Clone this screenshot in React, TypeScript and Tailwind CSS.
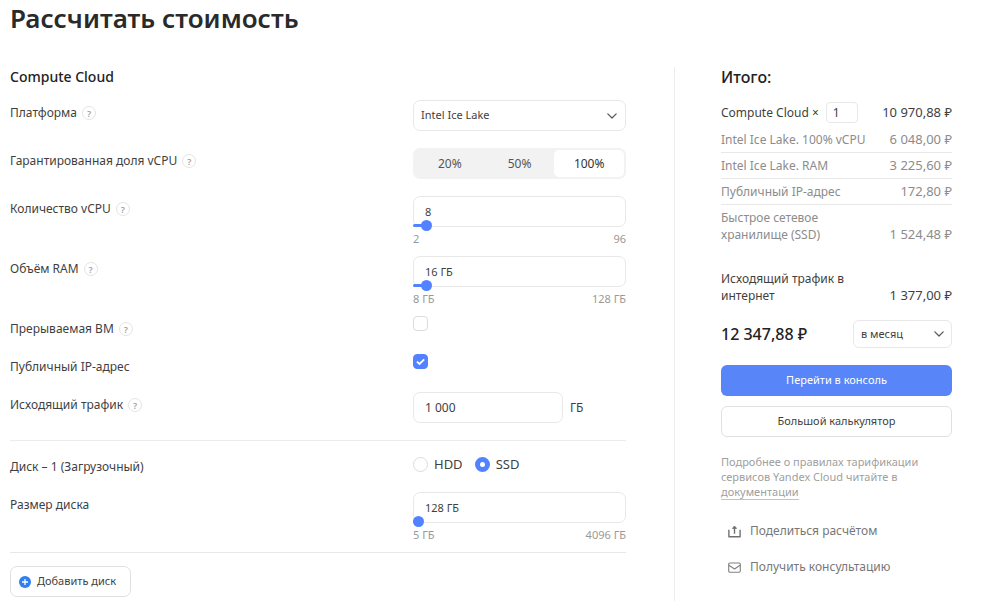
import { useId, useState, type ReactNode } from "react";

function Help({ topic }: { topic: string }) {
  return (
    <button
      type="button"
      aria-label={`Подсказка: ${topic}`}
      className="flex size-[14px] shrink-0 items-center justify-center rounded-full border border-[#e4e4e4] text-[9px] leading-none font-semibold text-[#a0a0a0]"
    >
      ?
    </button>
  );
}

function Chevron({ className }: { className: string }) {
  return (
    <svg
      viewBox="0 0 10 6"
      className={`pointer-events-none absolute top-1/2 h-[6px] w-[10px] -translate-y-1/2 fill-none stroke-[#555] ${className}`}
      strokeWidth="1.2"
      strokeLinecap="round"
      strokeLinejoin="round"
    >
      <path d="M0.8 0.8 5 5 9.2 0.8" />
    </svg>
  );
}

type RowProps = {
  label: string;
  htmlFor?: string;
  help?: boolean;
  className?: string;
  children: ReactNode;
};

function Row({ label, htmlFor, help, className = "mb-[17px]", children }: RowProps) {
  return (
    <div className={`flex items-start justify-between gap-4 ${className}`}>
      <div className="flex items-center gap-[5px] pt-[3px]">
        {htmlFor ? (
          <label htmlFor={htmlFor} className="leading-5">
            {label}
          </label>
        ) : (
          <span className="leading-5">{label}</span>
        )}
        {help && <Help topic={label} />}
      </div>
      <div className="w-[213px] shrink-0">{children}</div>
    </div>
  );
}

type SliderRowProps = {
  label: string;
  help?: boolean;
  min: number;
  max: number;
  initial: number;
  unit?: string;
};

function SliderRow({ label, help, min, max, initial, unit = "" }: SliderRowProps) {
  const id = useId();
  const [value, setValue] = useState(initial);
  const percent = ((value - min) / (max - min)) * 100;
  const parse = (text: string) => {
    const next = parseInt(text, 10);
    if (!Number.isNaN(next)) setValue(Math.min(max, Math.max(min, next)));
  };
  return (
    <Row label={label} htmlFor={id} help={help} className="mb-2">
      <div className="relative">
        <input
          id={id}
          value={`${value}${unit}`}
          onChange={(e) => parse(e.target.value)}
          className="block h-[31px] w-full rounded-[7px] border border-[#e8e8e8] bg-white px-[11px] text-[11px] outline-none"
        />
        <div
          className="absolute bottom-0 left-0 h-[3px] rounded-full bg-[#5282ff]"
          style={{ width: `${percent}%` }}
        />
        <input
          type="range"
          aria-label={label}
          min={min}
          max={max}
          value={value}
          onChange={(e) => setValue(Number(e.target.value))}
          className="absolute -inset-x-[6px] -bottom-1 m-0 h-3 w-auto min-w-[225px] appearance-none bg-transparent [&::-webkit-slider-thumb]:size-[11px] [&::-webkit-slider-thumb]:appearance-none [&::-webkit-slider-thumb]:rounded-full [&::-webkit-slider-thumb]:bg-[#5282ff]"
        />
      </div>
      <div className="flex justify-between pt-[3px] text-[11px] leading-[18px] text-[#999]">
        <span>{`${min}${unit}`}</span>
        <span>{`${max}${unit}`}</span>
      </div>
    </Row>
  );
}

function Check({ id, initial }: { id: string; initial: boolean }) {
  const [on, setOn] = useState(initial);
  return (
    <div className="relative h-[30px]">
      <input
        id={id}
        type="checkbox"
        checked={on}
        onChange={() => setOn(!on)}
        className="block size-[15px] appearance-none rounded-[4px] border border-[#dcdcdc] bg-white checked:border-[#5282ff] checked:bg-[#5282ff]"
      />
      {on && (
        <svg
          viewBox="0 0 15 15"
          className="pointer-events-none absolute top-0 left-0 size-[15px] fill-none stroke-white"
          strokeWidth="1.8"
        >
          <path d="M3.9 7.6 6.5 10 11.2 5.4" />
        </svg>
      )}
    </div>
  );
}

function Radio({ name, checked, onChange }: { name: string; checked: boolean; onChange: () => void }) {
  return (
    <label className="flex items-center gap-[6px] text-[13px] leading-5">
      <input
        type="radio"
        name="disk-type"
        checked={checked}
        onChange={onChange}
        className="size-[15px] appearance-none rounded-full border border-[#dcdcdc] bg-white checked:border-[5px] checked:border-[#5282ff]"
      />
      {name}
    </label>
  );
}

function Configurator() {
  const [share, setShare] = useState("100%");
  const [disk, setDisk] = useState("SSD");
  return (
    <form className="min-w-0 flex-1 border-r border-[#ececec] pr-12 text-xs text-[#3f3f3f]">
      <h2 className="mb-[13px] text-sm leading-5 font-medium text-[#222]">Compute Cloud</h2>

      <Row label="Платформа" htmlFor="platform" help>
        <div className="relative">
          <select
            id="platform"
            className="block h-[31px] w-full appearance-none rounded-[7px] border border-[#e8e8e8] bg-white px-[7px] text-[11px] outline-none"
          >
            <option>Intel Ice Lake</option>
          </select>
          <Chevron className="right-[9px]" />
        </div>
      </Row>

      <Row label="Гарантированная доля vCPU" help>
        <div className="flex h-[31px] rounded-[7px] bg-[#f2f2f2] p-[2px]">
          {["20%", "50%", "100%"].map((item) => (
            <button
              key={item}
              type="button"
              aria-pressed={share === item}
              onClick={() => setShare(item)}
              className={`flex-1 rounded-[5px] ${share === item ? "bg-white text-[#333]" : "text-[#555]"}`}
            >
              {item}
            </button>
          ))}
        </div>
      </Row>

      <SliderRow label="Количество vCPU" help min={2} max={96} initial={8} />
      <SliderRow label="Объём RAM" help min={8} max={128} initial={16} unit=" ГБ" />

      <Row label="Прерываемая ВМ" htmlFor="preemptible" help className="mb-2">
        <Check id="preemptible" initial={false} />
      </Row>
      <Row label="Публичный IP-адрес" htmlFor="public-ip" className="mb-2">
        <Check id="public-ip" initial={true} />
      </Row>
      <Row label="Исходящий трафик" htmlFor="traffic" help>
        <div className="flex items-center gap-[7px]">
          <input
            id="traffic"
            defaultValue="1 000"
            className="block h-[31px] w-[150px] rounded-[7px] border border-[#e8e8e8] bg-white px-[11px] outline-none"
          />
          <span>ГБ</span>
        </div>
      </Row>

      <div className="border-t border-[#ececec] pt-[13px]">
        <Row label="Диск – 1 (Загрузочный)" className="mb-2">
          <div className="flex h-[30px] items-start gap-3">
            {["HDD", "SSD"].map((item) => (
              <Radio key={item} name={item} checked={disk === item} onChange={() => setDisk(item)} />
            ))}
          </div>
        </Row>
        <SliderRow label="Размер диска" min={5} max={4096} initial={128} unit=" ГБ" />
      </div>

      <div className="border-t border-[#e8e8e8] pt-[13px] pb-1">
        <button
          type="button"
          className="flex h-[31px] items-center gap-[6px] rounded-[7px] border border-[#e0e0e0] px-[8px] pr-[14px] text-[11px]"
        >
          <svg viewBox="0 0 12 12" className="size-3">
            <circle cx="6" cy="6" r="6" className="fill-[#2f7ff0]" />
            <path d="M6 3v6M3 6h6" className="stroke-white" strokeWidth="1.3" />
          </svg>
          Добавить диск
        </button>
      </div>
    </form>
  );
}

const lines = [
  { name: "Intel Ice Lake. 100% vCPU", price: "6 048,00 ₽" },
  { name: "Intel Ice Lake. RAM", price: "3 225,60 ₽" },
  { name: "Публичный IP-адрес", price: "172,80 ₽" },
  { name: "Быстрое сетевое хранилище (SSD)", price: "1 524,48 ₽" },
];

function Summary() {
  return (
    <aside className="w-[277px] shrink-0 pl-[46px] text-xs text-[#3f3f3f]">
      <h2 className="text-base leading-5 font-medium text-[#222]">Итого:</h2>

      <div className="mt-[15px] flex items-center justify-between">
        <label className="flex items-center gap-[7px]">
          Compute Cloud ×
          <input
            defaultValue="1"
            className="h-[21px] w-8 rounded-[4px] border border-[#e8e8e8] px-[6px] outline-none"
          />
        </label>
        <span className="text-[13px]">10 970,88 ₽</span>
      </div>

      <ul className="mt-1 text-[#8c8c8c]">
        {lines.map((line) => (
          <li
            key={line.name}
            className="flex items-end justify-between border-b border-[#e8e8e8] py-1 leading-[17px] last:border-b-0"
          >
            <span className="max-w-[150px]">{line.name}</span>
            <span className="shrink-0 text-[13px]">{line.price}</span>
          </li>
        ))}
      </ul>

      <div className="mt-[23px] flex items-end justify-between leading-[17px]">
        <span className="w-[150px]">Исходящий трафик в интернет</span>
        <span className="text-[13px]">1 377,00 ₽</span>
      </div>

      <div className="mt-4 flex items-center justify-between">
        <strong className="text-base font-medium text-[#222]">12 347,88 ₽</strong>
        <div className="relative w-[99px]">
          <select
            aria-label="Период"
            className="block h-7 w-full appearance-none rounded-[6px] border border-[#e8e8e8] bg-white px-[7px] text-[11px] outline-none"
          >
            <option>в месяц</option>
          </select>
          <Chevron className="right-2" />
        </div>
      </div>

      <button
        type="button"
        className="mt-[17px] h-[31px] w-full rounded-[6px] bg-[#5885f7] text-[11px] text-white"
      >
        Перейти в консоль
      </button>
      <button
        type="button"
        className="mt-[10px] h-[31px] w-full rounded-[6px] border border-[#e0e0e0] text-[11px]"
      >
        Большой калькулятор
      </button>

      <p className="mt-[17px] text-[11px] leading-[15px] text-[#a0a0a0]">
        Подробнее о правилах тарификации сервисов Yandex Cloud читайте в{" "}
        <a href="#docs" className="border-b border-[#c4c4c4]">
          документации
        </a>
      </p>

      <div className="mt-[22px] flex flex-col gap-4 pl-[7px] leading-5 text-[#777]">
        <a href="#share" className="flex items-center gap-[9px]">
          <svg
            viewBox="0 0 13 13"
            className="size-[13px] fill-none stroke-[#707070]"
            strokeWidth="1.4"
            strokeLinejoin="round"
          >
            <path d="M0.9 4.8v6.9h11.2V4.8M6.5 8.8V1.6" />
            <path d="M4.4 3.4 6.5 1.1 8.6 3.4Z" className="fill-[#707070]" strokeWidth="0.8" />
          </svg>
          Поделиться расчётом
        </a>
        <a href="#consult" className="flex items-center gap-[9px]">
          <svg
            viewBox="0 0 13 13"
            className="size-[13px] fill-none stroke-[#808080]"
            strokeWidth="1.1"
            strokeLinejoin="round"
          >
            <rect x="0.7" y="2" width="11.6" height="9.2" rx="1.2" />
            <path d="M0.9 4.2 6.5 8 12.1 4.2" />
          </svg>
          Получить консультацию
        </a>
      </div>
    </aside>
  );
}

export default function App() {
  return (
    <main className="min-h-screen bg-white pr-[50px] pl-[10px] font-['Noto_Sans',sans-serif]">
      <h1 className="pb-[31px] text-[26px] leading-9 font-semibold text-[#2a2a2a]">
        Рассчитать стоимость
      </h1>
      <div className="flex">
        <Configurator />
        <Summary />
      </div>
    </main>
  );
}
